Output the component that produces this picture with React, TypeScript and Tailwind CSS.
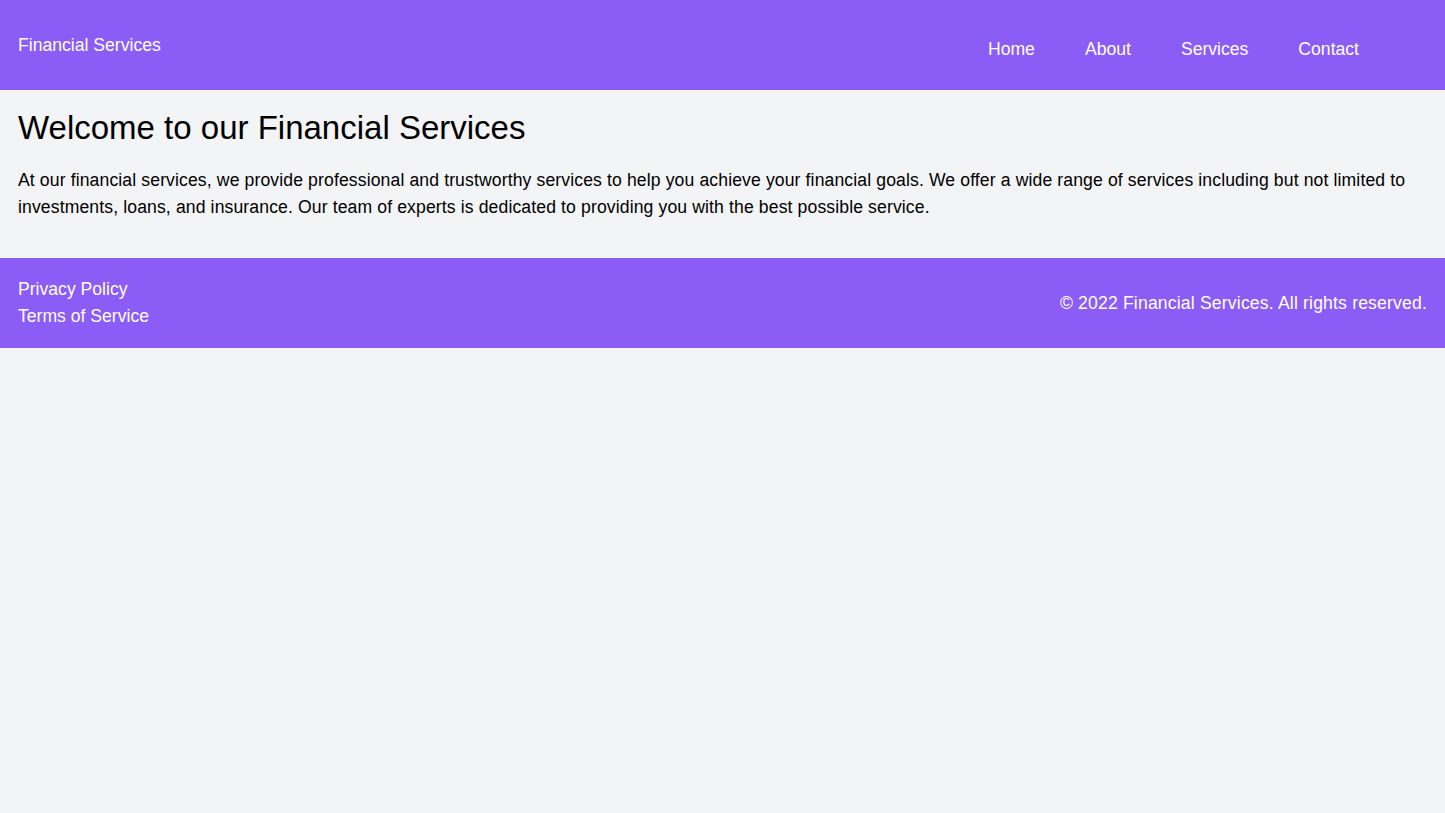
export default function App() {
  return (
    <div className="min-h-screen bg-[#f3f4f6] text-black font-['Liberation_Sans',Arial,sans-serif]">
      <header className="flex h-[90px] items-center justify-between bg-[#8b5cf6] px-[18px] text-white">
        <a href="#" className="text-[17.6px]">
          Financial Services
        </a>
        <nav className="mt-2 mr-[43px]">
          <ul className="flex text-[17.6px]">
            <li><a href="#" className="block px-[25px] py-2">Home</a></li>
            <li><a href="#" className="block px-[25px] py-2">About</a></li>
            <li><a href="#" className="block px-[25px] py-2">Services</a></li>
            <li><a href="#" className="block px-[25px] py-2">Contact</a></li>
          </ul>
        </nav>
      </header>

      <main className="px-[18px] pt-[18px] pb-[37px]">
        <h1 className="text-[33px] leading-[40px]">Welcome to our Financial Services</h1>
        <p className="mt-[19px] text-[17.6px] leading-[27px] tracking-[0.12px]">
          At our financial services, we provide professional and trustworthy services to help you achieve your
          financial goals. We offer a wide range of services including but not limited to investments, loans, and
          insurance. Our team of experts is dedicated to providing you with the best possible service.
        </p>
      </main>

      <footer className="flex h-[90px] items-center justify-between bg-[#8b5cf6] px-[18px] text-[17.6px] text-white">
        <div className="flex flex-col leading-[27px]">
          <a href="#">Privacy Policy</a>
          <a href="#">Terms of Service</a>
        </div>
        <p className="tracking-[0.17px]">© 2022 Financial Services. All rights reserved.</p>
      </footer>
    </div>
  );
}
